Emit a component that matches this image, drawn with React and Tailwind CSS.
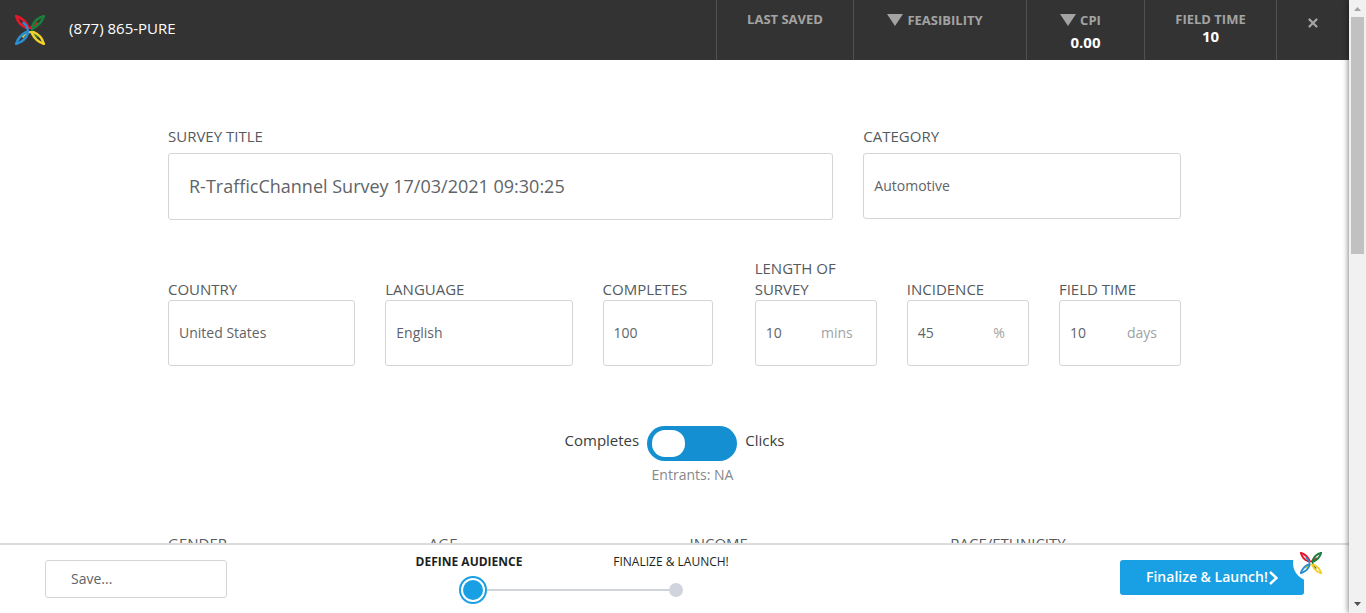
import React from "react";
import { X } from "lucide-react";

const PETALS = [
  { color: "#e5182d", angle: 0 },
  { color: "#1b7f3b", angle: 90 },
  { color: "#f3cf2b", angle: 180 },
  { color: "#2a8fd0", angle: 270 },
];

function Logo({ className }) {
  return (
    <svg viewBox="0 0 30 30" fill="none" className={className} aria-hidden="true">
      {PETALS.map(({ color, angle }) => (
        <g key={color} transform={`rotate(${angle} 15 15)`} stroke={color} strokeLinecap="round">
          <path d="M1.300 1.300C6 2.500 10.200 6 13 11.500" strokeWidth="2.600" />
          <path d="M1.300 1.300C2.500 6 5.800 10.500 11 12.600" strokeWidth="2.600" />
          <path d="M11 12.600C15.500 13.800 19 12.500 22 8.500" strokeWidth="2.200" />
        </g>
      ))}
    </svg>
  );
}

function Triangle() {
  return (
    <svg viewBox="0 0 16 12" className="h-3 w-4" fill="currentColor" aria-hidden="true">
      <path d="M0 0H16L8 12Z" />
    </svg>
  );
}

const label = "text-[15px] leading-[21px] text-[#555a5e]";
const box =
  "h-[66px] w-full appearance-none rounded-[3px] border border-[#d5d5d5] bg-white px-2.5 text-sm text-[#5f6468] outline-none";

function Field({ id, title, gap = "", children }) {
  return (
    <div className="flex flex-col justify-end px-[15px]">
      <label htmlFor={id} className={`${label} ${gap}`}>
        {title}
      </label>
      {children}
    </div>
  );
}

function Choice({ id, value }) {
  return (
    <select id={id} className={box} defaultValue={value}>
      <option>{value}</option>
    </select>
  );
}

function UnitField({ id, title, value, unit }) {
  return (
    <Field id={id} title={title}>
      <div className="flex h-[66px] items-center rounded-[3px] border border-[#d5d5d5] pl-2.5 pr-[23px] text-sm">
        <input id={id} defaultValue={value} className="w-full min-w-0 flex-1 text-[#5f6468] outline-none" />
        <span className="text-[#a0a3a5]">{unit}</span>
      </div>
    </Field>
  );
}

function Header() {
  const cell = "border-l border-[#505050] text-center text-[13px] font-bold leading-[18px] text-[#a3a3a3]";
  return (
    <header className="flex h-[60px] shrink-0 bg-[#333]">
      <div className="flex flex-1 items-center gap-6 pl-[15px]">
        <Logo className="h-[30px] w-[30px]" />
        <a href="tel:8778657873" className="pb-1 text-[15px] text-white">
          (877) 865-PURE
        </a>
      </div>
      <div className={`w-[137px] pt-2.5 ${cell}`}>LAST SAVED</div>
      <div className={`w-[173px] pt-[11px] ${cell}`}>
        <div className="flex items-center justify-center gap-1 pr-2.5">
          <Triangle />
          FEASIBILITY
        </div>
      </div>
      <div className={`w-[118px] pt-[11px] ${cell}`}>
        <div className="flex items-center justify-center gap-1 pr-2.5">
          <Triangle />
          CPI
        </div>
        <div className="pt-1 text-[15px] text-white">0.00</div>
      </div>
      <div className={`w-[132px] pt-2.5 ${cell}`}>
        FIELD TIME
        <div className="text-[15px] leading-4 text-white">10</div>
      </div>
      <div className={`w-[73px] pt-4 ${cell}`}>
        <button type="button" aria-label="Close">
          <X size={14} strokeWidth={4} />
        </button>
      </div>
    </header>
  );
}

function Footer() {
  return (
    <footer className="relative flex h-[70px] shrink-0 items-start border-t-2 border-[#dcdcdc] bg-white px-[45px]">
      <select
        aria-label="Save"
        className="mt-[15px] h-[38px] w-[182px] appearance-none rounded-[3px] border border-[#d5d5d5] pl-[25px] text-sm text-[#5f6468]"
      >
        <option>Save...</option>
      </select>
      <div className="ml-[141px] w-[404px] pt-2">
        <div className="grid grid-cols-2 text-center text-xs leading-[18px] text-[#1d1f21]">
          <span className="font-bold">DEFINE AUDIENCE</span>
          <span>FINALIZE &amp; LAUNCH!</span>
        </div>
        <div className="flex items-center pl-[91px] pr-[89px] pt-[5px]">
          <div className="flex h-7 w-7 items-center justify-center rounded-full border-2 border-[#189fe4]">
            <div className="h-5 w-5 rounded-full bg-[#189fe4]" />
          </div>
          <div className="h-0.5 flex-1 bg-[#d0d4da]" />
          <div className="h-3.5 w-3.5 rounded-full bg-[#d0d4dd]" />
        </div>
      </div>
      <button
        type="button"
        className="ml-auto mt-[15px] flex h-[35px] w-[184px] items-center gap-px rounded-[3px] bg-[#189fe4] pl-[26px] text-sm font-semibold text-white"
      >
        <span className="pb-0.5">Finalize &amp; Launch!</span>
        <svg viewBox="0 0 9 14" className="h-3.5 w-[9px]" fill="none" stroke="currentColor" strokeWidth="2.400" aria-hidden="true">
          <path d="M1 1L7.500 7L1 13" />
        </svg>
      </button>
      <button
        type="button"
        aria-label="Help"
        className="absolute right-5 top-0 flex h-9 w-9 items-center justify-center rounded-full bg-white"
      >
        <Logo className="h-[22px] w-[22px]" />
      </button>
    </footer>
  );
}

function Scrollbar() {
  return (
    <div
      className="z-10 flex w-[17px] shrink-0 flex-col items-center bg-[#f1f1f1] shadow-[0_0_6px_rgba(0,0,0,0.6)]"
      aria-hidden="true"
    >
      <svg viewBox="0 0 17 17" className="h-[17px] w-[17px] shrink-0">
        <path d="M5 11H12L8.500 7Z" fill="#a3a3a3" />
      </svg>
      <div className="h-[237px] w-[13px] bg-[#c1c1c1]" />
      <svg viewBox="0 0 17 17" className="mt-auto h-[17px] w-[17px] shrink-0">
        <path d="M5 6H12L8.500 10Z" fill="#505050" />
      </svg>
    </div>
  );
}

export default function App() {
  return (
    <div className="flex h-screen overflow-hidden bg-white font-['Open_Sans',sans-serif]">
      <div className="flex min-w-0 flex-1 flex-col">
        <Header />
        <main className="min-h-0 flex-1 overflow-hidden">
          <form className="mx-auto max-w-[1043px] pt-[66px]">
            <div className="grid grid-cols-[2fr_1fr] items-start">
              <Field id="title" title="SURVEY TITLE" gap="mb-1.5">
                <input
                  id="title"
                  defaultValue="R-TrafficChannel Survey 17/03/2021 09:30:25"
                  className="h-[67px] w-full rounded-[3px] border border-[#d5d5d5] px-5 pb-0.5 text-lg text-[#5f6468] outline-none"
                />
              </Field>
              <Field id="category" title="CATEGORY" gap="mb-1.5">
                <Choice id="category" value="Automotive" />
              </Field>
            </div>
            <div className="mt-[38px] grid grid-cols-[10fr_10fr_7fr_7fr_7fr_7fr]">
              <Field id="country" title="COUNTRY">
                <Choice id="country" value="United States" />
              </Field>
              <Field id="language" title="LANGUAGE">
                <Choice id="language" value="English" />
              </Field>
              <Field id="completes" title="COMPLETES">
                <input id="completes" defaultValue="100" className={`${box} max-w-[110px] pb-0.5`} />
              </Field>
              <UnitField id="length" title="LENGTH OF SURVEY" value="10" unit="mins" />
              <UnitField id="incidence" title="INCIDENCE" value="45" unit="%" />
              <UnitField id="field-time" title="FIELD TIME" value="10" unit="days" />
            </div>
            <div className="mt-[60px] flex justify-center gap-2 text-[15px] leading-[29px] text-[#3a3d40]">
              <span>Completes</span>
              <label className="flex h-[35px] w-[90px] items-center rounded-full bg-[#1490d2] pl-[5px]">
                <input type="checkbox" className="sr-only" aria-label="Count clicks instead of completes" />
                <span className="h-[27px] w-[33px] rounded-[13px] bg-white" />
              </label>
              <span>Clicks</span>
            </div>
            <p className="mt-1 pl-9 text-center text-sm text-[#86898c]">Entrants: NA</p>
            <div className={`mt-12 grid grid-cols-4 ${label}`}>
              <span className="px-[15px]">GENDER</span>
              <span className="px-[15px]">AGE</span>
              <span className="px-[15px]">INCOME</span>
              <span className="px-[15px]">RACE/ETHNICITY</span>
            </div>
          </form>
        </main>
        <Footer />
      </div>
      <Scrollbar />
    </div>
  );
}
